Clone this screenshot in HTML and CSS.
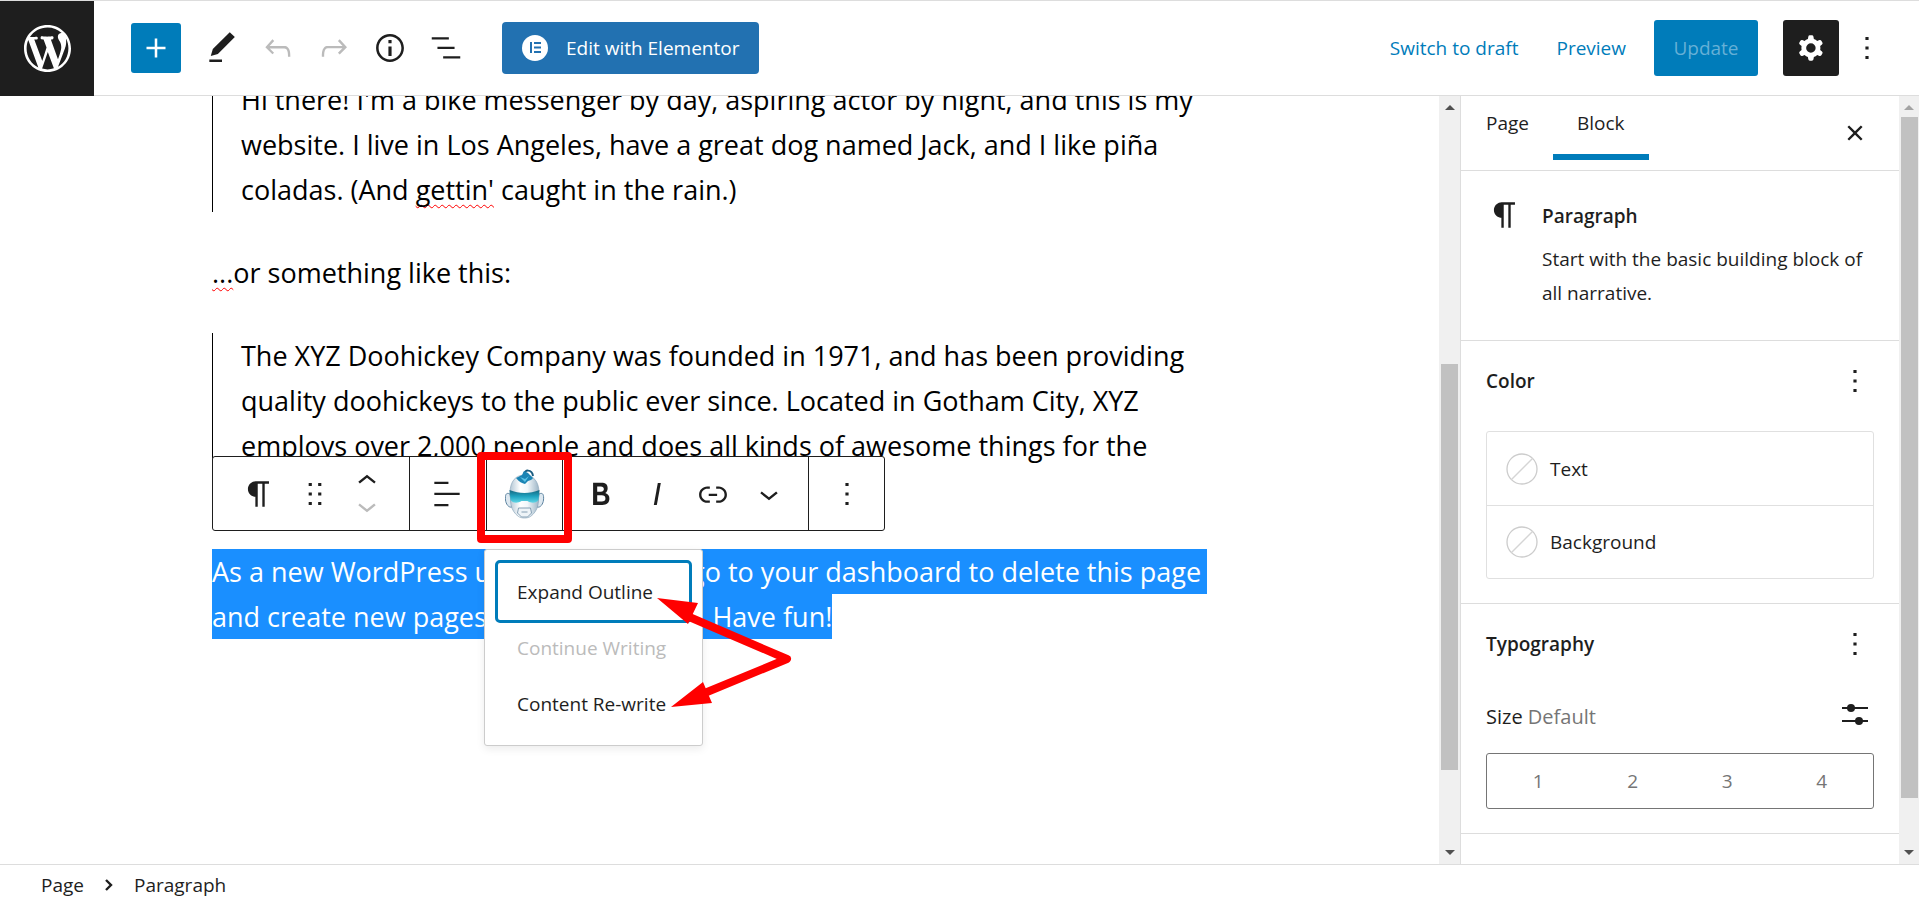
FILE: index.html
```html
<!DOCTYPE html>
<html lang="en">
<head>
<meta charset="utf-8">
<title>Edit Page</title>
<meta name="viewport" content="width=device-width, initial-scale=1">
<link rel="stylesheet" href="styles.css">
</head>
<body>
<svg class="sprite" aria-hidden="true">
  <symbol id="more" viewBox="0 0 24 24"><path d="M13 19h-2v-2h2v2zm0-6h-2v-2h2v2zm0-6h-2V5h2v2z"/></symbol>
  <symbol id="pilcrow" viewBox="0 0 24 24"><path d="M18.3 4H9.9v-.1l-.9.2c-2.3.4-4 2.4-4 4.8s1.7 4.4 4 4.8l.7.1V20h1.5V5.5h2.9V20h1.5V5.5h2.7V4z"/></symbol>
  <symbol id="none" viewBox="0 0 32 32"><circle cx="16" cy="16" r="15" fill="none" stroke="#ccc" stroke-width="1.3"/><path d="M5.5 26.5l21-21" stroke="#d5d5d5" stroke-width="1.4"/></symbol>
  <symbol id="down" viewBox="0 0 24 24"><path d="M17.5 11.6L12 16l-5.5-4.4.9-1.2L12 14l4.5-3.6 1 1.2z"/></symbol>
</svg>
<div class="editor">
  <header class="header">
    <a class="logo" href="#" aria-label="View pages"><svg viewBox="0 0 20 20"><path d="M20 10c0-5.51-4.49-10-10-10C4.48 0 0 4.49 0 10c0 5.52 4.48 10 10 10 5.51 0 10-4.48 10-10zM7.78 15.37L4.37 6.22c.55-.02 1.17-.08 1.17-.08.5-.06.44-1.13-.06-1.11 0 0-1.45.11-2.37.11-.18 0-.37 0-.58-.01C4.12 2.69 6.87 1.11 10 1.11c2.33 0 4.45.87 6.05 2.34-.68-.11-1.65.39-1.65 1.58 0 .74.45 1.36.9 2.1.35.61.55 1.36.55 2.46 0 1.49-1.4 5-1.4 5l-3.03-8.37c.54-.02.82-.17.82-.17.5-.05.44-1.25-.06-1.22 0 0-1.44.12-2.38.12-.87 0-2.33-.12-2.33-.12-.5-.03-.56 1.2-.06 1.22l.92.08 1.26 3.41zM17.41 10c.24-.64.74-1.87.43-4.25.7 1.29 1.05 2.71 1.05 4.25 0 3.29-1.73 6.24-4.4 7.78.97-2.59 1.94-5.2 2.92-7.78zM6.1 18.09C3.12 16.65 1.11 13.53 1.11 10c0-1.3.23-2.48.72-3.59C3.25 10.3 4.67 14.2 6.1 18.09zm4.03-6.63l2.58 6.98c-.86.29-1.76.45-2.71.45-.79 0-1.57-.11-2.29-.33.81-2.38 1.62-4.74 2.42-7.1z"/></svg></a>
    <div class="tools">
      <button class="inserter" aria-label="Add block"><svg class="icon" viewBox="0 0 24 24"><path d="M18 11.2h-5.2V6h-1.6v5.2H6v1.6h5.2V18h1.6v-5.2H18z"/></svg></button>
      <button class="tool" aria-label="Tools"><svg class="icon" viewBox="0 0 24 24"><path d="M20.1 5.1L16.9 2 6.2 12.7l-1.3 4.4 4.5-1.3L20.1 5.1zM4 20.8h8v-1.5H4v1.5z"/></svg></button>
      <button class="tool muted" aria-label="Undo"><svg class="icon" viewBox="0 0 24 24"><path d="M18.3 11.7c-.6-.6-1.4-.9-2.3-.9H6.7l2.9-3.3-1.1-1-4.5 5L8.5 16l1-1-2.7-2.7H16c.5 0 .9.2 1.3.5 1 1 1 3.4 1 4.5v.3h1.5v-.2c0-1.5 0-4.3-1.5-5.7z"/></svg></button>
      <button class="tool muted" aria-label="Redo"><svg class="icon" viewBox="0 0 24 24"><path d="M15.6 6.5l-1.1 1 2.9 3.3H8c-.9 0-1.7.3-2.3.9-1.4 1.5-1.4 4.2-1.4 5.6v.2h1.5v-.3c0-1.1 0-3.5 1-4.5.3-.3.7-.5 1.3-.5h9.2L14.5 15l1.1 1.1 4.6-4.6-4.6-5z"/></svg></button>
      <button class="tool" aria-label="Details"><svg class="icon" viewBox="0 0 24 24"><path d="M12 3.2c-4.8 0-8.8 3.9-8.8 8.8 0 4.8 3.9 8.8 8.8 8.8 4.8 0 8.8-3.9 8.8-8.8 0-4.8-4-8.8-8.8-8.8zm0 16c-4 0-7.2-3.3-7.2-7.2C4.8 8 8 4.8 12 4.8s7.2 3.3 7.2 7.2c0 4-3.2 7.2-7.2 7.2zM11 17h2v-6h-2v6zm0-8h2V7h-2v2z"/></svg></button>
      <button class="tool" aria-label="List view"><svg class="icon" viewBox="0 0 24 24"><path d="M13.8 5.2H3v1.5h10.8V5.2zm-3.6 12v1.5H21v-1.5H10.2zm7.2-6H6.6v1.5h10.8v-1.5z"/></svg></button>
    </div>
    <button class="elementor"><svg viewBox="0 0 26 26"><circle cx="13" cy="13" r="13" fill="#fff"/><path fill="#2271b1" d="M8 7h2v11H8zM12 7h7v2h-7zM12 11.500h7v2h-7zM12 16h7v2h-7z"/></svg>Edit with Elementor</button>
    <div class="actions">
      <button class="link">Switch to draft</button>
      <button class="link">Preview</button>
      <button class="update">Update</button>
      <button class="gear" aria-label="Settings"><svg class="icon" viewBox="0 0 24 24"><path fill-rule="evenodd" d="M10.289 4.836A1 1 0 0111.275 4h1.306a1 1 0 01.987.836l.244 1.466c.787.26 1.503.679 2.108 1.218l1.393-.522a1 1 0 011.216.437l.653 1.13a1 1 0 01-.23 1.273l-1.148.944a6.025 6.025 0 010 2.435l1.149.946a1 1 0 01.23 1.272l-.653 1.13a1 1 0 01-1.216.437l-1.394-.522c-.605.54-1.32.958-2.108 1.218l-.244 1.466a1 1 0 01-.987.836h-1.306a1 1 0 01-.986-.836l-.244-1.466a5.995 5.995 0 01-2.108-1.218l-1.394.522a1 1 0 01-1.217-.436l-.653-1.131a1 1 0 01.23-1.272l1.149-.946a6.026 6.026 0 010-2.435l-1.148-.944a1 1 0 01-.23-1.272l.653-1.131a1 1 0 011.217-.437l1.393.522a5.994 5.994 0 012.108-1.218l.244-1.466zM14.929 12a3 3 0 11-6 0 3 3 0 016 0z"/></svg></button>
      <button class="more" aria-label="Options"><svg class="icon"><use href="#more"/></svg></button>
    </div>
  </header>
  <div class="body">
    <main class="canvas">
      <div class="content">
        <blockquote>Hi there! I'm a bike messenger by day, aspiring actor by night, and this is my<br>website. I live in Los Angeles, have a great dog named Jack, and I like piña<br>coladas. (And <span class="typo">gettin'</span> caught in the rain.)</blockquote>
        <p><span class="typo">...</span>or something like this:</p>
        <blockquote class="tall">The XYZ Doohickey Company was founded in 1971, and has been providing<br>quality doohickeys to the public ever since. Located in Gotham City, XYZ<br>employs over 2,000 people and does all kinds of awesome things for the</blockquote>
        <div class="block">
          <p><span class="sel full">As a new WordPress user, you should go to your dashboard to delete this page</span><span class="sel">and create new pages for your content. Have fun!</span></p>
          <div class="toolbar" role="toolbar" aria-label="Block tools">
            <div class="group first">
              <button aria-label="Paragraph"><svg class="icon"><use href="#pilcrow"/></svg></button>
              <button aria-label="Drag"><svg class="icon" viewBox="0 0 24 24"><path d="M8 7h2V5H8v2zm0 6h2v-2H8v2zm0 6h2v-2H8v2zm6-14v2h2V5h-2zm0 8h2v-2h-2v2zm0 6h2v-2h-2v2z"/></svg></button>
              <div class="movers">
                <button aria-label="Move up"><svg class="icon" viewBox="0 0 24 24"><path d="M6.500 12.400L12 8l5.500 4.400-.9 1.200L12 10l-4.500 3.600-1-1.200z"/></svg></button>
                <button class="muted" aria-label="Move down"><svg class="icon"><use href="#down"/></svg></button>
              </div>
            </div>
            <div class="group align"><button aria-label="Align"><svg class="icon" viewBox="0 0 24 24"><path d="M4 19.800h8.900v-1.500H4v1.500zm8.900-15.600H4v1.500h8.900V4.200zm-8.900 7v1.500h16v-1.500H4z"/></svg></button></div>
            <div class="group bot"><button aria-label="AI assistant"><svg class="robot" viewBox="0 0 40 50">
              <defs><linearGradient id="visor" x2="0" y2="1"><stop offset="0" stop-color="#15667f"/><stop offset=".5" stop-color="#1fa3c0"/><stop offset="1" stop-color="#62d6e6"/></linearGradient>
              <linearGradient id="face"><stop offset="0" stop-color="#b4c7d5"/><stop offset=".35" stop-color="#fff"/><stop offset=".6" stop-color="#f2f7fa"/><stop offset="1" stop-color="#9db5c6"/></linearGradient></defs>
              <path d="M5 25c-4-2-5 1-4.500 6 .5 4 3 8 6.500 7zM34 25c4-2 5 1 4.500 6-.5 4-3 8-6.500 7z" fill="#dde8f0" stroke="#5d83a0"/>
              <path d="M5 24C5 12 11 6 19.500 6S34 12 34 24l-1 12c-1 5-4 9-7.500 11.500-3 2-9 2-12 0C10 45 7 41 6 36z" fill="url(#face)" stroke="#8fa9bd" stroke-width=".7"/>
              <path d="M19 6c0-6 8-6 9 1" fill="none" stroke="#1a5c80" stroke-width="2"/>
              <path d="M11 9l6-3 2-4 4 2 5 5c-1 2-3 2-5 3l-3 3c-3-1-6-2-9-6z" fill="#1b84b4"/>
              <path d="M15 8l5 2 4-3-4 6z" fill="#5bc3e6"/>
              <path d="M4.500 21c10 4 20 4 30 0l-1 10c-3 4-8 3-11 1h-6c-3 2-8 3-11-1z" fill="url(#visor)"/>
              <path d="M13.500 39h12l1 5-4 4h-6l-4-4zM16.500 43h6" fill="#eef4f8" stroke="#7895ac" stroke-width=".9"/>
            </svg></button></div>
            <div class="group format">
              <button aria-label="Bold"><svg class="icon" viewBox="0 0 24 24"><path d="M14.700 11.300c1-.6 1.500-1.600 1.500-3 0-2.300-1.300-3.400-4-3.400H7v14h5.800c1.400 0 2.500-.3 3.300-1 .8-.7 1.200-1.700 1.200-2.900.1-1.900-.8-3.100-2.600-3.700zm-5.100-4h2.300c.6 0 1.100.1 1.400.4.3.3.5.7.5 1.200s-.2 1-.5 1.200c-.3.3-.8.4-1.400.4H9.600V7.300zm4.600 9c-.4.3-1 .4-1.700.4H9.600v-3.900h2.900c.7 0 1.300.2 1.700.5.4.3.6.8.6 1.500s-.2 1.200-.6 1.500z"/></svg></button>
              <button aria-label="Italic"><svg class="icon" viewBox="0 0 24 24"><path d="M12.500 5L10 19h1.900l2.500-14z"/></svg></button>
              <button aria-label="Link"><svg class="icon" viewBox="0 0 24 24"><path d="M15.600 7.200H14v1.500h1.600c2 0 3.700 1.700 3.700 3.700s-1.700 3.700-3.700 3.700H14v1.500h1.600c2.800 0 5.200-2.300 5.200-5.200 0-2.900-2.300-5.200-5.200-5.200zM4.700 12.400c0-2 1.700-3.700 3.700-3.700H10V7.200H8.400c-2.900 0-5.200 2.300-5.200 5.200 0 2.900 2.300 5.200 5.200 5.200H10v-1.500H8.400c-2 0-3.700-1.700-3.700-3.700zm4.600.9h5.300v-1.500H9.300v1.500z"/></svg></button>
              <button aria-label="More formatting"><svg class="icon"><use href="#down"/></svg></button>
            </div>
            <div class="group last"><button aria-label="Block options"><svg class="icon"><use href="#more"/></svg></button></div>
          </div>
          <div class="menu" role="menu">
            <button class="focused" role="menuitem">Expand Outline</button>
            <button class="disabled" role="menuitem">Continue Writing</button>
            <button role="menuitem">Content Re-write</button>
          </div>
          <div class="frame"></div>
          <svg class="arrows" viewBox="0 0 136 110" aria-hidden="true"><path d="M30 18L130 61L38 99" fill="none" stroke="red" stroke-width="8" stroke-linejoin="round"/><path d="M0 0L41 5L31 26zM14 109L46 84L55 105z" fill="red"/></svg>
        </div>
      </div>
    </main>
    <div class="scroll page-scroll" aria-hidden="true"><svg viewBox="0 0 10 5"><path d="M0 5l5-5 5 5z"/></svg><div class="track"><div class="thumb"></div></div><svg viewBox="0 0 10 5"><path d="M0 0l5 5 5-5z"/></svg></div>
    <aside class="sidebar">
      <div class="tabs"><button>Page</button><button class="active">Block</button><button class="close" aria-label="Close settings"><svg class="icon" viewBox="0 0 24 24"><path d="M12 13.060l3.712 3.713 1.061-1.060L13.061 12l3.712-3.712-1.060-1.060L12 10.938 8.288 7.227l-1.061 1.060L10.939 12l-3.712 3.712 1.060 1.061L12 13.061z"/></svg></button></div>
      <section class="card"><svg class="icon"><use href="#pilcrow"/></svg><div><h2>Paragraph</h2><p>Start with the basic building block of all narrative.</p></div></section>
      <section class="panel">
        <div class="row"><h2>Color</h2><button aria-label="Color options"><svg class="icon"><use href="#more"/></svg></button></div>
        <div class="colors"><button><svg><use href="#none"/></svg>Text</button><button><svg><use href="#none"/></svg>Background</button></div>
      </section>
      <section class="panel">
        <div class="row"><h2>Typography</h2><button aria-label="Typography options"><svg class="icon"><use href="#more"/></svg></button></div>
        <div class="row size"><span>Size <span class="hint">Default</span></span><button aria-label="Set custom size"><svg class="icon" viewBox="0 0 38 38"><path d="M6 11h26M6 24h26" stroke="#1e1e1e" stroke-width="2"/><circle cx="15" cy="11" r="4"/><circle cx="23" cy="24" r="4"/></svg></button></div>
        <div class="sizes"><button>1</button><button>2</button><button>3</button><button>4</button></div>
      </section>
    </aside>
    <div class="scroll side-scroll" aria-hidden="true"><svg class="off" viewBox="0 0 10 5"><path d="M0 5l5-5 5 5z"/></svg><div class="track"><div class="thumb"></div></div><svg viewBox="0 0 10 5"><path d="M0 0l5 5 5-5z"/></svg></div>
  </div>
  <footer class="footer"><a href="#">Page</a><svg viewBox="0 0 8 12"><path d="M1 1l5 5-5 5" fill="none" stroke="#1e1e1e" stroke-width="2.400"/></svg><span>Paragraph</span></footer>
</div>
</body>
</html>
```
FILE: styles.css
```css
* { box-sizing: border-box; }
body { margin: 0; font-family: "Open Sans", "Noto Sans", sans-serif; font-size: 19px; color: #1e1e1e; background: #fff; }
button { font: inherit; color: inherit; background: none; border: 0; padding: 0; display: flex; align-items: center; justify-content: center; }
a { color: inherit; text-decoration: none; }
h2, p, blockquote { margin: 0; }
svg { display: block; flex: none; }
.sprite { width: 0; height: 0; position: absolute; }
.icon { width: 38px; height: 38px; fill: currentColor; }
.muted { color: #bbb; }

.editor { height: 100vh; display: flex; flex-direction: column; border-top: 1px solid #ddd; overflow: hidden; }
.header { flex: none; height: 95px; display: flex; align-items: center; border-bottom: 1px solid #ddd; }
.logo { width: 94px; height: 95px; background: #1e1e1e; display: flex; align-items: center; justify-content: center; }
.logo svg { width: 47px; height: 47px; fill: #fff; }
.tools { display: flex; align-items: center; gap: 18px; margin-left: 37px; }
.inserter { width: 50px; height: 50px; border-radius: 3px; background: #007cba; color: #fff; margin-right: 4px; }
.elementor { height: 52px; margin-left: 37px; padding: 0 20px; gap: 18px; border-radius: 4px; background: #2271b1; color: #fff; }
.elementor svg { width: 26px; height: 26px; }
.actions { margin-left: auto; display: flex; align-items: center; padding-right: 33px; }
.link { color: #007cba; margin-right: 38px; }
.update { width: 104px; height: 56px; border-radius: 3px; background: #007cba; color: #66b0d6; margin-right: 25px; margin-left: -10px; }
.gear { width: 56px; height: 56px; border-radius: 3px; background: #1e1e1e; color: #fff; margin-right: 9px; }

.body { flex: 1; min-height: 0; display: flex; }
.canvas { flex: 1; min-width: 0; overflow: hidden; padding-left: 212px; }
.content { max-width: 995px; margin-top: -19px; display: flex; flex-direction: column; gap: 38px; font-size: 27px; line-height: 45px; color: #000; white-space: nowrap; }
blockquote { border-left: 1px solid #000; padding-left: 28px; }
.tall { height: 178px; }
.typo { text-decoration: underline wavy #f00 1px; text-underline-offset: 4px; text-decoration-skip-ink: none; }
.block { position: relative; }
.sel { display: block; width: fit-content; background: #1a8fff; color: #fff; }
.sel.full { width: 100%; }

.toolbar { position: absolute; left: 0; bottom: calc(100% + 18px); height: 75px; display: flex; background: #fff; border: 1px solid #1e1e1e; border-radius: 3px; color: #1e1e1e; }
.group { display: flex; align-items: center; border-right: 1px solid #1e1e1e; }
.group:last-child { border-right: 0; }
.first { width: 197px; padding-left: 27px; gap: 18px; }
.movers { display: flex; flex-direction: column; margin-left: -4px; }
.movers button { height: 25px; }
.align { width: 77px; padding-left: 18px; }
.bot { width: 76px; justify-content: center; }
.robot { width: 40px; height: 50px; }
.format { width: 246px; padding-left: 19px; gap: 18px; }
.last { width: 75px; justify-content: center; }

.menu { position: absolute; left: 272px; top: 0; width: 219px; height: 197px; padding: 10px; display: flex; flex-direction: column; background: #fff; border: 1px solid #ccc; border-radius: 3px; box-shadow: 0 3px 8px rgba(0, 0, 0, .08); color: #1e1e1e; font-size: 19px; line-height: 28px; }
.menu button { flex: none; height: 56px; justify-content: flex-start; padding: 0 22px; }
.menu .focused { height: 63px; margin-bottom: -3px; padding: 0 19px; border: 3px solid #007cba; border-radius: 5px; }
.menu .disabled { color: #bbb; }
.frame { position: absolute; left: 265px; top: -97px; width: 95px; height: 91px; border: 8px solid #f00; border-radius: 4px; }
.arrows { position: absolute; left: 445px; top: 49px; width: 136px; height: 110px; }

.scroll { flex: none; width: 20px; background: #f0f0f0; display: flex; flex-direction: column; align-items: center; padding: 9px 2px; gap: 7px; }
.scroll svg { width: 10px; height: 5px; fill: #505050; }
.scroll .off { fill: #a3a3a3; }
.track { flex: 1; width: 17px; display: flex; flex-direction: column; }
.thumb { background: #c1c1c1; }
.page-scroll { width: 21px; }
.page-scroll .thumb { margin-top: 247px; height: 406px; }
.side-scroll .thumb { height: 681px; }

.sidebar { flex: none; width: 439px; border-left: 1px solid #ddd; overflow: hidden; }
.tabs { display: flex; height: 75px; border-bottom: 1px solid #ddd; font-weight: 500; padding: 0 25px 0 1px; }
.tabs button { height: 64px; padding: 0 24px 10px; }
.tabs .active { border-bottom: 6px solid #007cba; padding-bottom: 4px; }
.tabs .close { margin-left: auto; padding: 0; height: 74px; }
.card { display: flex; gap: 18px; padding: 25px 24px 30px 25px; border-bottom: 1px solid #ddd; line-height: 34px; }
.card h2 { margin: 3px 0 9px; }
.card p { max-width: 340px; }
h2 { font-size: 19px; font-weight: 600; }
.panel { padding: 21px 25px 24px; border-bottom: 1px solid #ddd; }
.row { display: flex; align-items: center; justify-content: space-between; height: 38px; }
.colors { margin-top: 31px; border: 1px solid #e0e0e0; border-radius: 3px; }
.colors button { width: 100%; height: 73px; justify-content: flex-start; padding: 0 19px; gap: 12px; }
.colors button + button { border-top: 1px solid #e0e0e0; }
.colors svg { width: 32px; height: 32px; }
.size { margin-top: 34px; font-size: 20px; }
.hint { color: #757575; }
.sizes { margin-top: 18px; height: 56px; display: flex; border: 1px solid #757575; border-radius: 3px; padding: 0 4px; color: #757575; }
.sizes button { flex: 1; }
.footer { flex: none; height: 38px; border-top: 1px solid #ddd; display: flex; align-items: center; padding: 3px 41px 0; gap: 21px; }
.footer svg { width: 8px; height: 12px; }
```
